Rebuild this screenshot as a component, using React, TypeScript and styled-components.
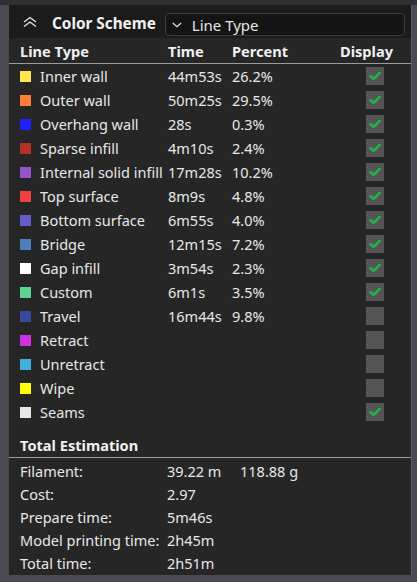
import React from "react";
import styled, { createGlobalStyle } from "styled-components";

const Global = createGlobalStyle`
  html, body { margin: 0; padding: 0; }
  body {
    background: #4b4a52;
    font-family: "Noto Sans", "Open Sans", sans-serif;
    color: #e8e8e8;
  }
`;

const TopStrip = styled.div`
  height: 5px;
  background: #303034;
`;

const Panel = styled.div`
  margin-left: 9px;
  width: 402px;
  background: #262626;
  box-shadow: 1px 1px 0 #5a5a62;
`;

const HeaderBar = styled.div`
  height: 33px;
  background: #1b1b1b;
  display: flex;
  align-items: center;
  padding-left: 13px;
`;

const Title = styled.span`
  font-weight: 700;
  font-size: 15.3px;
  color: #f2f2f2;
  margin-left: 14px;
  margin-top: 2px;
`;

const IconWrap = styled.span`
  display: flex;
  margin-top: 1px;
`;

const Dropdown = styled.div`
  margin-left: 9px;
  align-self: flex-end;
  margin-bottom: 2px;
  width: 240px;
  height: 23px;
  box-sizing: border-box;
  border: 1px solid #3c3c3c;
  border-radius: 4px;
  background: #141414;
  display: flex;
  align-items: center;
  padding-left: 6px;
  font-size: 15px;
  color: #e6e6e6;
`;

const DropText = styled.span`
  margin-left: 10px;
`;

const Grid = styled.div`
  display: grid;
  grid-template-columns: 148px 64px 108px 1fr;
  padding-left: 11px;
`;

const HeadCell = styled.div`
  height: 25px;
  display: flex;
  align-items: center;
  font-weight: 700;
  font-size: 14.6px;
  color: #f0f0f0;
`;

const HeadRule = styled.div`
  grid-column: 1 / -1;
  margin-left: -11px;
  height: 1px;
  background: #9c9c9c;
`;

const Cell = styled.div<{ $center?: boolean }>`
  height: 24px;
  display: flex;
  align-items: center;
  justify-content: ${(p) => (p.$center ? "center" : "flex-start")};
  font-size: 14.5px;
  color: #e8e8e8;
  white-space: nowrap;
`;

const Swatch = styled.span<{ $c: string }>`
  width: 11px;
  height: 11px;
  background: ${(p) => p.$c};
  margin-right: 9px;
  flex: none;
`;

const Check = styled.div`
  width: 18px;
  height: 18px;
  background: #555555;
  display: flex;
  align-items: center;
  justify-content: center;
  margin-left: -1px;
`;

const SectionTitle = styled.div`
  padding: 9px 0 0 11px;
  height: 24px;
  font-weight: 700;
  font-size: 14.6px;
  color: #f0f0f0;
  border-bottom: 1px solid #9c9c9c;
  display: flex;
  align-items: center;
`;

const Totals = styled.div`
  display: grid;
  grid-template-columns: 147px 73px 1fr;
  padding-left: 11px;
  padding-top: 1px;
  padding-bottom: 1px;
`;

const TCell = styled.div`
  height: 23px;
  display: flex;
  align-items: center;
  font-size: 14.5px;
  color: #e8e8e8;
  white-space: nowrap;
`;

const rows: [string, string, string, string, boolean][] = [
  ["Inner wall", "#ffe64d", "44m53s", "26.2%", true],
  ["Outer wall", "#ff7d38", "50m25s", "29.5%", true],
  ["Overhang wall", "#1f1fff", "28s", "0.3%", true],
  ["Sparse infill", "#b0302a", "4m10s", "2.4%", true],
  ["Internal solid infill", "#9654cc", "17m28s", "10.2%", true],
  ["Top surface", "#f04040", "8m9s", "4.8%", true],
  ["Bottom surface", "#665cc7", "6m55s", "4.0%", true],
  ["Bridge", "#4d80ba", "12m15s", "7.2%", true],
  ["Gap infill", "#ffffff", "3m54s", "2.3%", true],
  ["Custom", "#5ed194", "6m1s", "3.5%", true],
  ["Travel", "#38489b", "16m44s", "9.8%", false],
  ["Retract", "#cc33dd", "", "", false],
  ["Unretract", "#40b0d8", "", "", false],
  ["Wipe", "#ffff00", "", "", false],
  ["Seams", "#e6e6e6", "", "", true],
];

const totals: [string, string, string][] = [
  ["Filament:", "39.22 m", "118.88 g"],
  ["Cost:", "2.97", ""],
  ["Prepare time:", "5m46s", ""],
  ["Model printing time:", "2h45m", ""],
  ["Total time:", "2h51m", ""],
];

const CheckMark = () => (
  <svg width="12" height="10" viewBox="0 0 12 10">
    <path d="M1.5 5.2 L4.6 8 L10.5 1.8" fill="none" stroke="#1fb84a" strokeWidth="2.4" strokeLinecap="round" strokeLinejoin="round" />
  </svg>
);

const DoubleUp = () => (
  <svg width="16" height="12" viewBox="0 0 16 12">
    <path d="M2 6 L8 1.5 L14 6 M2 10.5 L8 6 L14 10.5" fill="none" stroke="#e6e6e6" strokeWidth="1.4" />
  </svg>
);

const ChevronDown = () => (
  <svg width="10" height="6" viewBox="0 0 10 6">
    <path d="M0.8 1 L5 4.8 L9.2 1" fill="none" stroke="#e0e0e0" strokeWidth="1.2" />
  </svg>
);

export default function App() {
  return (
    <>
      <Global />
      <TopStrip />
      <Panel>
        <HeaderBar>
          <IconWrap>
            <DoubleUp />
          </IconWrap>
          <Title>Color Scheme</Title>
          <Dropdown>
            <ChevronDown />
            <DropText>Line Type</DropText>
          </Dropdown>
        </HeaderBar>
        <Grid>
          <HeadCell>Line Type</HeadCell>
          <HeadCell>Time</HeadCell>
          <HeadCell>Percent</HeadCell>
          <HeadCell>Display</HeadCell>
          <HeadRule />
          {rows.map(([name, c, t, p, on]) => (
            <React.Fragment key={name}>
              <Cell>
                <Swatch $c={c} />
                {name}
              </Cell>
              <Cell>{t}</Cell>
              <Cell>{p}</Cell>
              <Cell $center>
                <Check>{on && <CheckMark />}</Check>
              </Cell>
            </React.Fragment>
          ))}
        </Grid>
        <SectionTitle>Total Estimation</SectionTitle>
        <Totals>
          {totals.map(([a, b, c]) => (
            <React.Fragment key={a}>
              <TCell>{a}</TCell>
              <TCell>{b}</TCell>
              <TCell>{c}</TCell>
            </React.Fragment>
          ))}
        </Totals>
      </Panel>
    </>
  );
}
